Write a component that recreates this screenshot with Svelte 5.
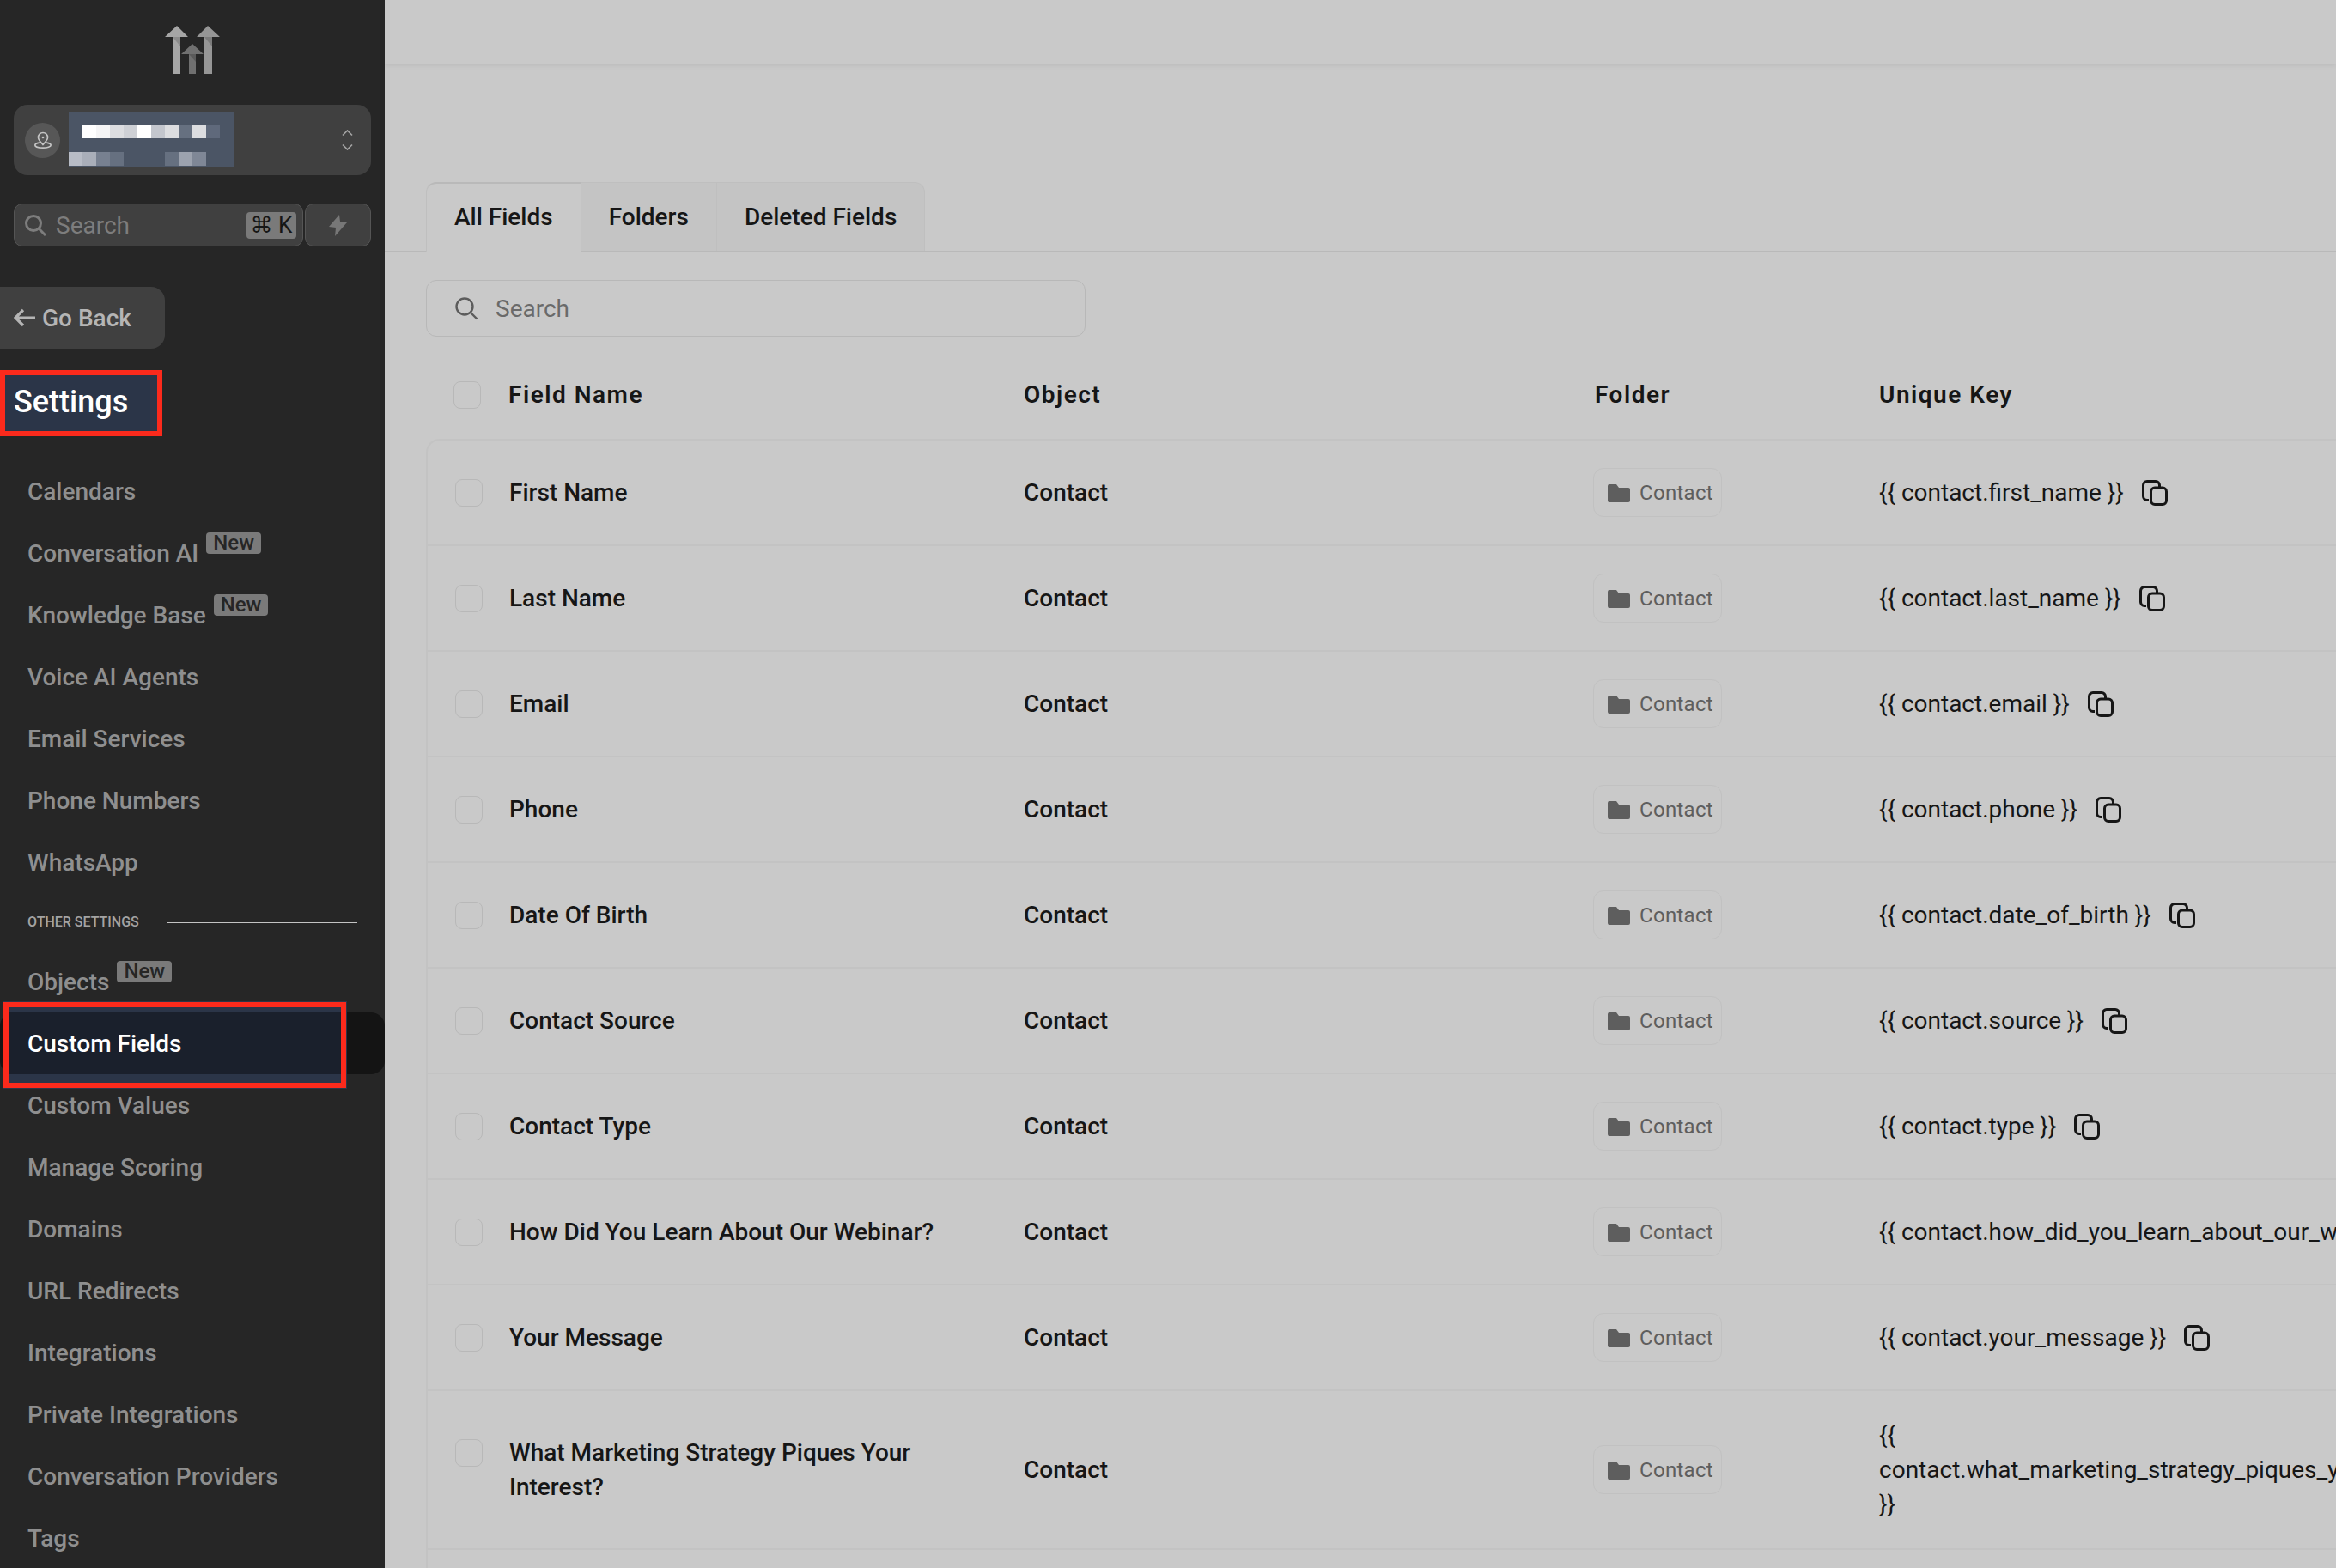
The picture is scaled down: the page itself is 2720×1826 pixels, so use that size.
<script>
	const topNav = [
		{ label: 'Calendars' },
		{ label: 'Conversation AI', badge: true },
		{ label: 'Knowledge Base', badge: true },
		{ label: 'Voice AI Agents' },
		{ label: 'Email Services' },
		{ label: 'Phone Numbers' },
		{ label: 'WhatsApp' }
	];
	const otherNav = [
		{ label: 'Objects', badge: true },
		{ label: 'Custom Fields', active: true },
		{ label: 'Custom Values' },
		{ label: 'Manage Scoring' },
		{ label: 'Domains' },
		{ label: 'URL Redirects' },
		{ label: 'Integrations' },
		{ label: 'Private Integrations' },
		{ label: 'Conversation Providers' },
		{ label: 'Tags' }
	];
	const fields = [
		{ name: 'First Name', key: 'first_name' },
		{ name: 'Last Name', key: 'last_name' },
		{ name: 'Email', key: 'email' },
		{ name: 'Phone', key: 'phone' },
		{ name: 'Date Of Birth', key: 'date_of_birth' },
		{ name: 'Contact Source', key: 'source' },
		{ name: 'Contact Type', key: 'type' },
		{ name: 'How Did You Learn About Our Webinar?', key: 'how_did_you_learn_about_our_webinar' },
		{ name: 'Your Message', key: 'your_message' },
		{ name: 'What Marketing Strategy Piques Your Interest?', key: 'what_marketing_strategy_piques_your_interest', tall: true }
	];
	// blurred-out account name
	const pixelRows = [
		{ y: 14, x: 16, cells: ['#ffffff', '#f5f5f6', '#dcdde0', '#ced0d5', '#ffffff', '#c3c6cd', '#dcdde0', '#667080', '#dcdde0', '#5f697b'] },
		{ y: 46, x: 0, cells: ['#b8bcc6', '#a9aeb9', '#778090', '#667080', '#4b5565', '#4b5565', '#4b5565', '#667080', '#9ca2ae', '#7f8796'] }
	];
</script>

{#snippet navItem(item)}
	<li class="nav-item" class:active={item.active}>
		<span class="nav-label">{item.label}</span>
		{#if item.badge}<span class="badge">New</span>{/if}
	</li>
{/snippet}

<div class="page">
	<aside class="sidebar">
		<svg class="logo" width="64" height="56" viewBox="0 0 64 56" aria-hidden="true">
			<polygon points="14,0 27,13 18,13 18,56 9,56 9,13 0,13" fill="#a6a6a6" />
			<polygon points="9,13 18,13 18,24" fill="#8c8c8c" />
			<polygon points="50,0 64,13 55,13 55,56 46,56 46,13 37,13" fill="#969696" />
			<polygon points="46,13 55,13 55,24" fill="#7c7c7c" />
			<polygon points="32,21 45,33 36,33 36,56 28,56 28,33 19,33" fill="#707070" />
			<polygon points="28,33 36,33 36,42" fill="#5a5a5a" />
		</svg>

		<div class="account">
			<span class="account-icon">
				<svg width="22" height="22" viewBox="0 0 22 22" fill="none" stroke="#c4c4c4" stroke-width="1.7" aria-hidden="true">
					<path d="M11 16.5 7.2 12a5.5 5.5 0 1 1 7.6 0z" stroke-linejoin="round" />
					<circle cx="11" cy="8" r="1.3" fill="#c4c4c4" stroke="none" />
					<path d="M6.6 14.2C3.4 14.8 1.8 15.8 1.8 17c0 1.8 4 3.2 9.2 3.2s9.2-1.4 9.2-3.2c0-1.2-1.6-2.2-4.8-2.8" stroke-linecap="round" />
				</svg>
			</span>
			<svg class="redacted" width="193" height="64" viewBox="0 0 193 64" aria-hidden="true">
				<rect width="193" height="64" fill="#4b5565" />
				{#each pixelRows as row}
					{#each row.cells as fill, i}
						<rect x={row.x + i * 16} y={row.y} width="16" height="16" {fill} />
					{/each}
				{/each}
			</svg>
			<svg class="chevrons" width="13" height="24" viewBox="0 0 13 24" fill="none" stroke="#a3a3a3" stroke-width="1.7" aria-hidden="true">
				<path d="M1 6.5 6.5 1 12 6.5M1 17.5 6.5 23 12 17.5" />
			</svg>
		</div>

		<div class="quick">
			<div class="side-search">
				<svg width="26" height="26" viewBox="0 0 26 26" fill="none" stroke="#7d7d7d" stroke-width="3" aria-hidden="true">
					<circle cx="11" cy="11" r="8.5" />
					<path d="m17 17 8 8" />
				</svg>
				<span class="side-search-text">Search</span>
				<kbd class="shortcut">⌘ K</kbd>
			</div>
			<div class="bolt">
				<svg width="21" height="25" viewBox="0 0 21 25" aria-hidden="true">
					<path d="M12 0 0 14l8 1-1 10 14-16-8-1z" fill="#777" />
				</svg>
			</div>
		</div>

		<div class="go-back">
			<svg width="26" height="22" viewBox="0 0 26 22" fill="none" stroke="#b5b5b5" stroke-width="3.2" aria-hidden="true">
				<path d="M25 11H3M11 2l-9 9 9 9" />
			</svg>
			<span>Go Back</span>
		</div>

		<h2 class="settings-title">Settings</h2>

		<ul class="nav">
			{#each topNav as item}
				{@render navItem(item)}
			{/each}
		</ul>
		<div class="nav-section">
			<span>OTHER SETTINGS</span>
			<i></i>
		</div>
		<ul class="nav">
			{#each otherNav as item}
				{@render navItem(item)}
			{/each}
		</ul>
	</aside>

	<main class="main">
		<div class="topbar"></div>

		<div class="tabs">
			<button class="tab current">All Fields</button>
			<button class="tab">Folders</button>
			<button class="tab">Deleted Fields</button>
		</div>

		<div class="content">
			<div class="search">
				<svg width="28" height="28" viewBox="0 0 28 28" fill="none" stroke="#5c5c5c" stroke-width="2.4" aria-hidden="true">
					<circle cx="12" cy="12" r="9.5" />
					<path d="m19 19 7.5 7.5" />
				</svg>
				<span>Search</span>
			</div>

			<div class="thead">
				<span class="check"></span>
				<span>Field Name</span>
				<span>Object</span>
				<span>Folder</span>
				<span>Unique Key</span>
			</div>

			<div class="tbody">
				{#each fields as field}
					<div class="row" class:tall={field.tall}>
						<span class="check"></span>
						<span class="field-name">{field.name}</span>
						<span>Contact</span>
						<span class="chip">
							<svg width="26" height="22" viewBox="0 0 26 22" aria-hidden="true">
								<path d="M0 3a2 2 0 0 1 2-2h8l3 4h11a2 2 0 0 1 2 2v13a2 2 0 0 1-2 2H2a2 2 0 0 1-2-2z" fill="#5e5e5e" />
							</svg>
							Contact
						</span>
						<span class="key">
							<span class="key-text">{`{{ contact.${field.key} }}`}</span>
							<svg class="copy" width="30" height="30" viewBox="0 0 30 30" fill="none" stroke="#161616" stroke-width="3" aria-hidden="true">
								<path d="M8 23.5H6A4.5 4.5 0 0 1 1.5 19V6A4.5 4.5 0 0 1 6 1.5h10A4.5 4.5 0 0 1 20.5 6v2.5" />
								<rect x="10.5" y="9" width="18" height="19.5" rx="4.5" />
							</svg>
						</span>
					</div>
				{/each}
				<div class="row end"></div>
			</div>
		</div>
	</main>
</div>

<style>
	:global(body) {
		margin: 0;
		overflow: hidden;
		background: #c9c9c9;
	}

	.page {
		display: flex;
		width: 2720px;
		height: 1826px;
		overflow: hidden;
		font-family: Roboto, 'Liberation Sans', sans-serif;
		font-size: 28px;
		color: #161616;
	}

	.sidebar {
		flex: none;
		width: 448px;
		background: #262626;
		color: #8f8f8f;
		font-weight: 500;
	}

	.logo {
		display: block;
		margin: 30px 0 0 192px;
	}

	.account {
		display: flex;
		align-items: center;
		height: 82px;
		margin: 36px 16px 0;
		padding: 0 21px 0 13px;
		box-sizing: border-box;
		background: #404040;
		border-radius: 16px;
	}

	.account-icon {
		display: flex;
		align-items: center;
		justify-content: center;
		width: 41px;
		height: 41px;
		border-radius: 50%;
		background: #575757;
	}

	.redacted {
		margin-left: 10px;
	}

	.chevrons {
		margin-left: auto;
	}

	.quick {
		display: flex;
		gap: 2px;
		height: 50px;
		margin: 33px 16px 0;
	}

	.side-search {
		display: flex;
		align-items: center;
		width: 337px;
		padding: 0 7px 0 11px;
		box-sizing: border-box;
		background: #404040;
		border: 1px solid #555;
		border-radius: 10px;
		color: #7d7d7d;
		font-weight: 400;
	}

	.side-search-text {
		margin-left: 11px;
	}

	.shortcut {
		display: flex;
		align-items: center;
		justify-content: center;
		width: 58px;
		height: 31px;
		margin-left: auto;
		border-radius: 4px;
		background: #7a7a7a;
		color: #161616;
		font-family: Roboto, 'DejaVu Sans', sans-serif;
		font-size: 26px;
	}

	.bolt {
		display: flex;
		flex: 1;
		align-items: center;
		justify-content: center;
		background: #404040;
		border: 1px solid #555;
		border-radius: 10px;
	}

	.bolt svg {
		filter: blur(0.6px);
	}

	.go-back {
		display: flex;
		align-items: center;
		gap: 7px;
		width: 192px;
		height: 72px;
		margin-top: 47px;
		padding-left: 16px;
		box-sizing: border-box;
		background: #404040;
		border-radius: 0 16px 16px 0;
		color: #b5b5b5;
	}

	.settings-title {
		width: 189px;
		height: 77px;
		margin: 25px 0 28px;
		padding-left: 10px;
		box-sizing: border-box;
		background: #2b3548;
		border: 6px solid #fb2a1c;
		color: #fff;
		font-size: 36px;
		font-weight: 500;
		line-height: 63px;
	}

	.nav {
		margin: 0;
		padding: 0;
		list-style: none;
	}

	.nav-item {
		position: relative;
		display: flex;
		align-items: center;
		height: 72px;
		padding-left: 32px;
	}

	.nav-label {
		position: relative;
		z-index: 1;
	}

	.nav-item.active {
		background: #141414;
		border-radius: 16px;
		color: #fff;
	}

	.nav-item.active::before {
		content: '';
		position: absolute;
		top: -12px;
		left: 4px;
		width: 399px;
		height: 100px;
		box-sizing: border-box;
		border: 6px solid #fb2a1c;
		outline: 1px solid #2b3548;
		background: linear-gradient(#2b3548 6px, #1a202c 6px, #1a202c 78px, #2b3548 78px);
	}

	.badge {
		position: relative;
		top: -12px;
		height: 25px;
		margin-left: 9px;
		padding: 0 8px;
		border-radius: 4px;
		background: #7a7a7a;
		color: #262626;
		font-size: 24px;
		font-weight: 500;
		line-height: 25px;
	}

	.nav-section {
		display: flex;
		align-items: center;
		height: 67px;
		padding: 0 32px;
		font-size: 16px;
		font-weight: 500;
		color: #a3a3a3;
	}

	.nav-section i {
		flex: 1;
		height: 1px;
		margin: 2px 0 0 33px;
		background: #c4c4c4;
	}

	.main {
		flex: 1;
		min-width: 0;
		overflow: hidden;
	}

	.topbar {
		height: 74px;
		box-shadow: 0 1px 6px rgba(0, 0, 0, 0.1);
	}

	.tabs {
		display: flex;
		height: 82px;
		margin-top: 138px;
		padding-left: 48px;
		border-bottom: 2px solid #b9b9b9;
		box-sizing: border-box;
	}

	.tab {
		padding: 0 32px;
		font: inherit;
		font-weight: 500;
		color: #161616;
		background: #c4c4c4;
		border: 0;
		border-top: 1px solid #bfbfbf;
		border-right: 1px solid #bfbfbf;
	}

	.tab:last-child {
		border-top-right-radius: 12px;
	}

	.tab.current {
		height: 82px;
		padding-bottom: 4px;
		background: #c9c9c9;
		border-left: 1px solid #bfbfbf;
		border-top: 2px solid #b9b9b9;
		border-top-left-radius: 12px;
	}

	.content {
		padding-left: 48px;
	}

	.search {
		display: flex;
		align-items: center;
		gap: 20px;
		width: 768px;
		height: 66px;
		margin-top: 32px;
		padding-left: 32px;
		box-sizing: border-box;
		border: 1.5px solid #b8b8b8;
		border-radius: 12px;
		color: #6a6a6a;
	}

	.thead,
	.row {
		display: grid;
		align-items: center;
	}

	.thead {
		grid-template-columns: 64px 600px 665px 331px 1fr;
		height: 119px;
		padding: 16px 0 0 32px;
		box-sizing: border-box;
		font-weight: 600;
		letter-spacing: 1.5px;
	}

	.check {
		width: 32px;
		height: 32px;
		box-sizing: border-box;
		border: 1.5px solid #b8b8b8;
		border-radius: 8px;
	}

	.tbody {
		border-top: 2px solid #c3c3c3;
		border-left: 2px solid #c3c3c3;
		border-top-left-radius: 16px;
	}

	.row {
		grid-template-columns: 63px 599px 663px 333px 1fr;
		height: 123px;
		padding-left: 32px;
		box-sizing: border-box;
		border-bottom: 2px solid #c3c3c3;
		font-weight: 500;
		white-space: nowrap;
	}

	.row.tall {
		height: 185px;
		line-height: 40px;
	}

	.row.tall .check {
		align-self: start;
		margin-top: 56px;
	}

	.row.end {
		height: 40px;
		border-bottom: 0;
	}

	.field-name {
		max-width: 520px;
		white-space: normal;
	}

	.chip {
		display: flex;
		align-items: center;
		gap: 11px;
		width: 150px;
		height: 57px;
		padding-left: 16px;
		box-sizing: border-box;
		border: 1.5px solid #c1c1c1;
		border-radius: 12px;
		color: #5e5e5e;
		font-size: 24px;
		font-weight: 400;
		letter-spacing: 0.3px;
	}

	.key {
		display: flex;
		align-items: center;
		gap: 21px;
		font-weight: 400;
	}

	.tall .key-text {
		width: min-content;
		white-space: normal;
	}

	.tall .copy {
		display: none;
	}

	.copy {
		flex: none;
	}
</style>
